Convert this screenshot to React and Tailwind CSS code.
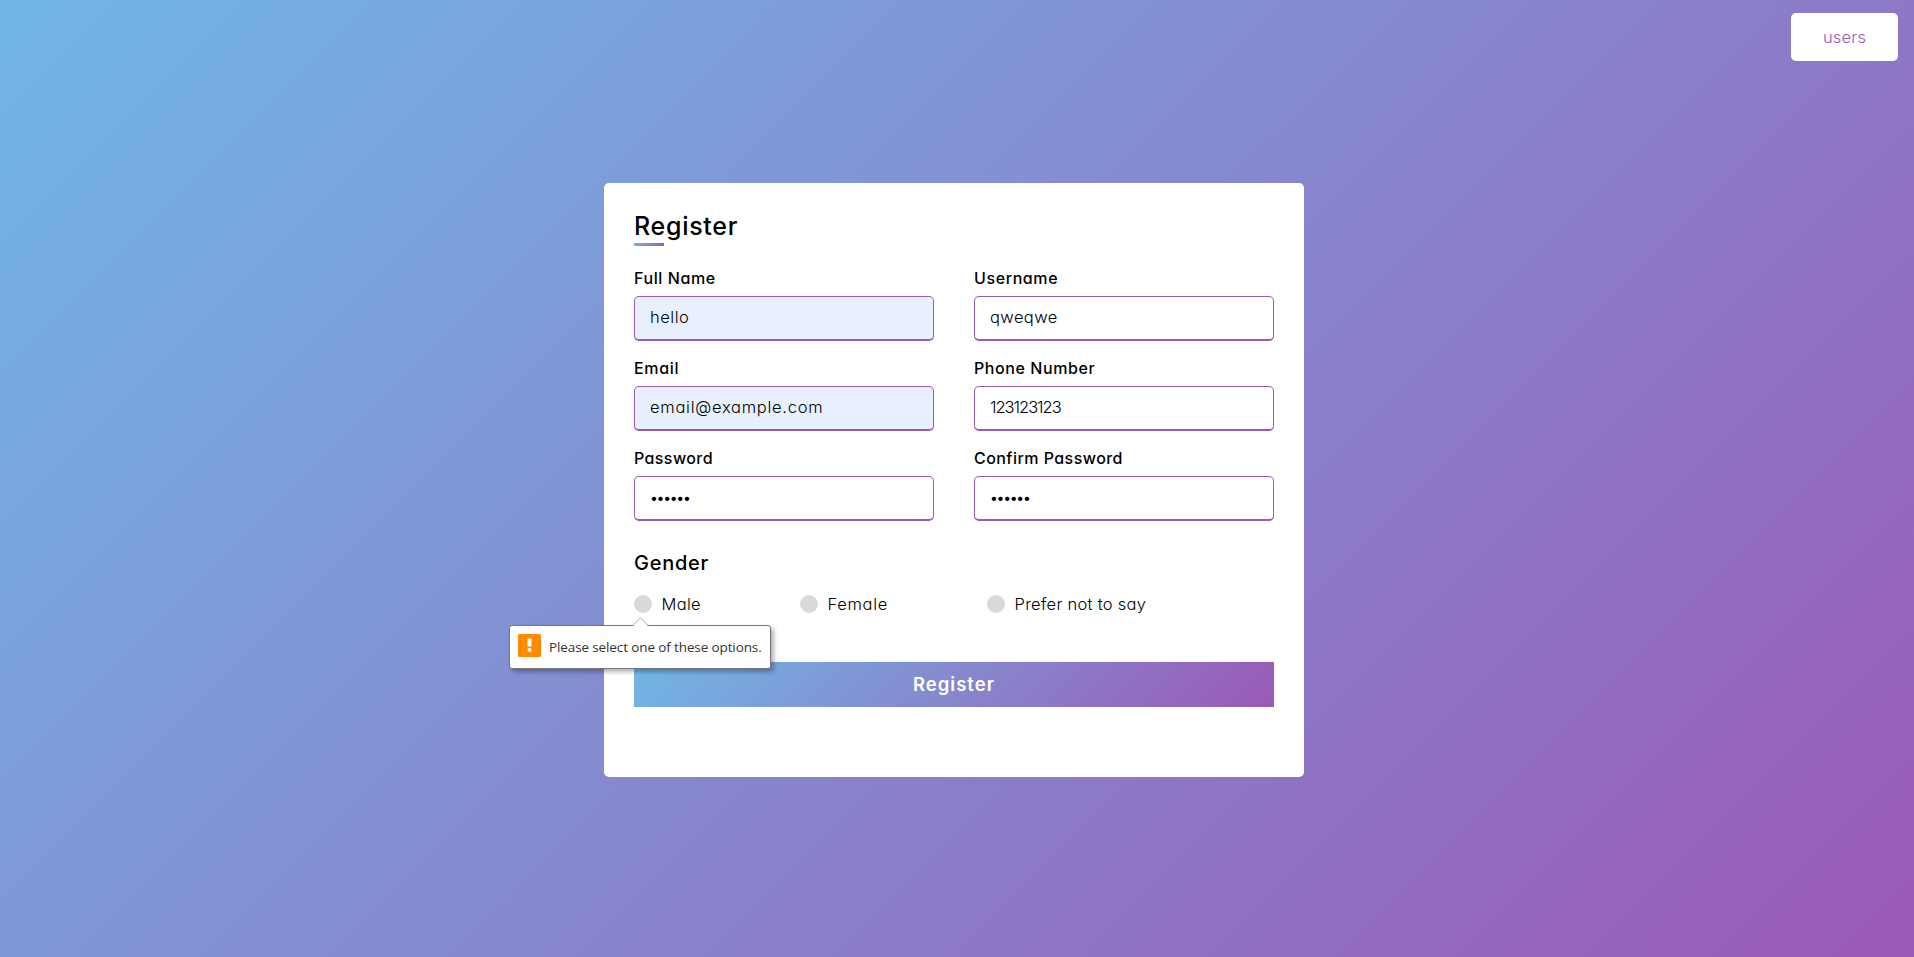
import React from "react";

const fields = [
  { label: "Full Name", value: "hello", filled: true, ls: "tracking-[0.6px]", vs: "tracking-[0.5px]" },
  { label: "Username", value: "qweqwe", ls: "tracking-[0.6px]", vs: "tracking-[0.4px]" },
  { label: "Email", value: "email@example.com", filled: true, ls: "tracking-[0.65px]", vs: "tracking-[0.73px]" },
  { label: "Phone Number", value: "123123123", ls: "tracking-[0.58px]", vs: "tracking-[-1.02px]" },
  { label: "Password", value: "qweqwe", type: "password", ls: "tracking-[0.4px]", vs: "text-[14px] tracking-[-1.3px]" },
  { label: "Confirm Password", value: "qweqwe", type: "password", ls: "tracking-[0.45px]", vs: "text-[14px] tracking-[-1.3px]" },
];

const genders = [
  { label: "Male", ls: "tracking-[0.3px]", place: "w-[166px]" },
  { label: "Female", ls: "tracking-[0.7px]", place: "w-[187px]" },
  { label: "Prefer not to say", ls: "tracking-[0.29px]", place: "" },
];

function Field({ label, value, type = "text", filled, ls, vs }) {
  return (
    <label className="flex h-[75px] flex-col">
      <span className={`h-[30px] text-[16px] leading-[24px] font-[450] text-black ${ls}`}>{label}</span>
      <input
        type={type}
        defaultValue={value}
        className={`h-[45px] w-full rounded-[5px] border border-b-2 border-[#9b59b6] px-[15px] pb-0.5 text-black outline-none ${type === "password" ? "font-normal" : "text-[16.5px] font-[320]"} ${filled ? "bg-[#e8f0fe]" : "bg-white"} ${vs}`}
      />
    </label>
  );
}

function ValidationBubble() {
  return (
    <div className="absolute top-[22px] -left-[125px] z-10 w-[262px]">
      <svg className="absolute top-0 left-[123px] z-10" width="17" height="10" viewBox="0 0 17 10">
        <path d="M0.5 10 L8.5 0.8 L16.5 10Z" fill="#fff" />
        <path d="M0.5 9 L8.5 0.8 L16.5 9" fill="none" stroke="#a9a9a9" strokeWidth="1" />
      </svg>
      <div className="mt-2 flex h-11 items-center rounded-[3px] border border-[#767676] bg-white pl-2 shadow-[3px_3px_4px_rgba(0,0,0,0.3)]">
        <svg className="mb-1 shrink-0" width="23" height="23" viewBox="0 0 23 23">
          <rect width="23" height="23" rx="1.5" fill="#ff8c00" />
          <path d="M9.5 4.5h4v8h-4z" fill="#fff" />
          <circle cx="11.5" cy="16" r="2" fill="#fff" />
        </svg>
        <span className="ml-2 font-['Open_Sans','Noto_Sans',sans-serif] text-[13.5px] leading-5 tracking-[-0.12px] whitespace-nowrap text-[#333]">
          Please select one of these options.
        </span>
      </div>
    </div>
  );
}

export default function App() {
  return (
    <div className="flex h-[957px] w-full flex-col bg-[linear-gradient(135deg,#71b7e6,#9b59b6)] font-['Inter','Noto_Sans',sans-serif] [font-feature-settings:'cv11']">
      <header className="flex h-[183px] justify-end pt-[13px] pr-4">
        <button className="h-12 w-[107px] rounded-[5px] bg-white pt-px text-[16.5px] font-[350] tracking-[0.2px] text-[#9b59b6]">users</button>
      </header>
      <main className="ml-[604px] h-[594px] w-[700px] rounded-[5px] bg-white px-[30px] pt-[25px]">
        <h1 className="h-[35px] text-[25px] leading-[37px] font-[450] tracking-[0.7px] text-black">Register</h1>
        <div className="h-[3px] w-[30px] bg-[linear-gradient(135deg,#71b7e6,#9b59b6)]" />
        <form>
          <div className="mt-5 grid grid-cols-2 gap-x-10 gap-y-[15px]">
            {fields.map((f) => (
              <Field key={f.label} {...f} />
            ))}
          </div>
          <h2 className="mt-[27px] h-[47px] text-[20px] leading-[30px] font-[450] tracking-[0.75px] text-black">Gender</h2>
          <div className="relative flex h-[18px]">
            {genders.map((g) => (
              <label key={g.label} className={`flex items-center ${g.place}`}>
                <span className="mr-[9.5px] size-[18px] shrink-0 rounded-full bg-[#d9d9d9]" />
                <span className={`text-[16.5px] leading-[18px] font-[320] whitespace-nowrap text-black ${g.ls}`}>{g.label}</span>
              </label>
            ))}
            <ValidationBubble />
          </div>
          <button type="button" className="mt-[49px] h-[45px] w-full bg-[linear-gradient(135deg,#71b7e6,#9b59b6)] text-[18.5px] font-semibold tracking-[1px] text-white">
            Register
          </button>
        </form>
      </main>
    </div>
  );
}
